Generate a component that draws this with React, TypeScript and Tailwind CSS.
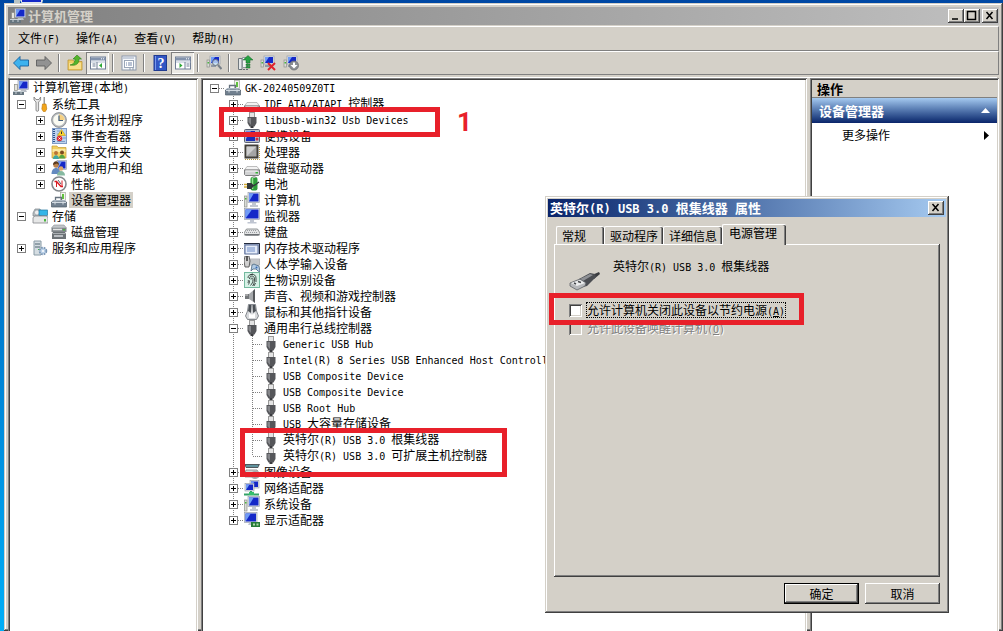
import { Fragment, type ReactNode } from "react";

interface TreeItem {
  level: number;
  label: string;
  icon: string;
  open?: boolean;
  leaf?: boolean;
  selected?: boolean;
  last?: boolean;
}

const RAISED = "bg-[#d4d0c8] shadow-[inset_-1px_-1px_#404040,inset_1px_1px_#fff,inset_-2px_-2px_#808080]";
const FRAME = "bg-[#d4d0c8] shadow-[inset_-1px_-1px_#404040,inset_1px_1px_#d4d0c8,inset_-2px_-2px_#808080,inset_2px_2px_#fff]";
const SUNKEN = "shadow-[inset_1px_1px_#808080,inset_-1px_-1px_#fff,inset_2px_2px_#404040,inset_-2px_-2px_#d4d0c8]";

const screen = (x: number, y: number, w: number, h: number) => (
  <>
    <rect x={x} y={y} width={w} height={h} fill="#dfe3ea" stroke="#8d96a6" strokeWidth=".6" />
    <rect x={x + 1} y={y + 1} width={w - 2} height={h - 2} fill="#1428c8" />
    <path d={`M${x + 1} ${y + 1}h${(w - 2) / 2}L${x + 1} ${y + h - 1}z`} fill="#6f9bf5" />
  </>
);

const smallPc = (
  <>
    {screen(4, 1, 10, 8)}
    <rect x="1" y="5" width="2.500" height="7" fill="#dadcd7" stroke="#8d918b" strokeWidth=".7" />
    <rect x="1.500" y="7" width="1.500" height="1.500" fill="#49b63d" />
    <path d="M5 11h5" stroke="#9099a5" strokeWidth="2" />
  </>
);

const usbPlug = (
  <>
    <rect x="5.500" y="0.500" width="5" height="5" fill="#e4e4e4" stroke="#9a9a9a" />
    <path d="M3.500 5h9v6l-2 3.500h-5l-2-3.500z" fill="#55565a" />
    <path d="M4.500 6H7v7l-2.500-3z" fill="#85868a" />
    <rect x="6.500" y="14" width="3" height="2" fill="#3a3b3f" />
  </>
);

const drive = (
  <>
    <path d="M3 6.500h10l2.500 3.500H.5z" fill="#f2f2f2" stroke="#a5a5a5" strokeWidth=".7" />
    <path d="M.5 10h15v4.500l-1 1h-13l-1-1z" fill="#d0d1d2" stroke="#6f7173" strokeWidth=".9" />
    <path d="M1.500 11h12" stroke="#f7f7f7" />
    <rect x="11.500" y="12" width="2.500" height="1.500" fill="#36b436" />
  </>
);

const toolbox = (
  <>
    <rect x="9.500" y="0.500" width="5" height="8" fill="#f2f4ee" stroke="#a4a89e" strokeWidth=".7" />
    <rect x="11" y="2" width="2" height="5" fill="#62c23e" />
    <path d="M4.500 8V5.500h6V8" fill="none" stroke="#66727e" strokeWidth="1.300" />
    <path d="M2 8h12l2 3H0z" fill="#aab6c2" />
    <path d="M.5 10h15v5H.5z" fill="#71808f" stroke="#4f5c69" strokeWidth=".7" />
    <path d="M1 10.500h14" stroke="#d2dae2" />
    <path d="M4 9.500v3M12 9.500v3" stroke="#d9dfe4" />
  </>
);

const pane = (
  <>
    <rect x=".5" y="2" width="15" height="12" fill="#fff" stroke="#6e7c94" />
    <path d="M.5 2.500h15v3H.5z" fill="#8393ad" />
    <path d="M11 3.800h1M13 3.800h1" stroke="#fff" />
    <path d="M1 7h14.500" stroke="#b4bfd0" />
  </>
);

const ICONS: Record<string, ReactNode> = {
  mmc: (
    <>
      {screen(5, 0.5, 10.5, 9)}
      <path d="M8 10h5l1 2H7z" fill="#b7bcc4" />
      <rect x="1.500" y="4.500" width="3" height="6" fill="#e5e5dd" stroke="#8b8b85" strokeWidth=".7" />
      <path d="M0 11h11v4H0z" fill="#66757f" />
      <path d="M0 11.500h11M3 11v3M8 11v3" stroke="#c7d0d6" />
    </>
  ),
  tools: (
    <>
      <path d="M2 1v3l2 2v8a1.300 1.300 0 0 0 2.600 0V6l2-2V1L7 3.500H4z" fill="#e6e6e6" stroke="#777" strokeWidth=".8" />
      <path d="M11.500 1h1.500v7h-1.500z" fill="#9c9c9c" />
      <path d="M10.500 8h3.500l.8 5-1.500 2.500h-2L9.800 13z" fill="#f2a51a" stroke="#bb760a" strokeWidth=".6" />
    </>
  ),
  clock: (
    <>
      <circle cx="8" cy="8" r="7.400" fill="#b6babd" stroke="#808488" strokeWidth=".8" />
      <circle cx="8" cy="8" r="5.800" fill="#fbfbf2" />
      <path d="M8 8V2.300A5.700 5.700 0 0 1 13.700 8z" fill="#f6d183" />
      <path d="M8 3.500V8.500h4" fill="none" stroke="#405c7c" strokeWidth="1.200" />
    </>
  ),
  events: (
    <>
      <rect x="1.500" y=".5" width="14" height="15" fill="#bdd3ef" stroke="#7f9cc6" />
      <path d="M3 1v14" stroke="#2c538e" strokeWidth="2" strokeDasharray="1 1" />
      <path d="M6 3h3M6 6h2M6 13.500h8M12 10h3" stroke="#7d9cc8" />
      <path d="M10.500 1.500l4 6h-8z" fill="#ffd52e" stroke="#bd9200" strokeWidth=".5" />
      <path d="M10.500 3.500v2.500" stroke="#333" />
      <circle cx="8.500" cy="10.500" r="2.800" fill="#dd2932" />
      <path d="M7.500 9.500l2 2M9.500 9.500l-2 2" stroke="#fff" strokeWidth=".9" />
    </>
  ),
  share: (
    <>
      <path d="M1 2h5l1 1.500h8V14H1z" fill="#f2cf61" stroke="#c39b31" strokeWidth=".7" />
      <path d="M1.500 5h13v3h-13z" fill="#fbe9a2" />
      <circle cx="5" cy="9" r="2" fill="#b87337" />
      <path d="M2 15c0-5 6-5 6 0z" fill="#3fa6a1" />
      <circle cx="11" cy="8.500" r="2" fill="#7b4b20" />
      <path d="M8 14.500c0-5 6-5 6 0z" fill="#54a641" />
    </>
  ),
  users: (
    <>
      {screen(6, 0.5, 9.5, 9)}
      <circle cx="5" cy="5" r="2.700" fill="#bb824b" />
      <path d="M2 5c0-5 6-5 6 0L6 3.500z" fill="#5a3b20" />
      <path d="M.5 14c0-8 9-8 9 0z" fill="#648ac0" />
      <circle cx="10" cy="8.500" r="2.300" fill="#d9a66b" />
      <path d="M6 15.500c0-6 8-6 8 0z" fill="#86b9a1" />
    </>
  ),
  perf: (
    <>
      <circle cx="8" cy="8" r="7" fill="#fff" stroke="#83888c" strokeWidth="1.600" />
      <path d="M3.500 5.500h2l4.500 5h2" fill="none" stroke="#d81d25" strokeWidth="1.500" />
      <path d="M5.500 5v6M11 4.500v6" stroke="#d81d25" />
      <path d="M7 4l3 4" stroke="#5b6268" />
    </>
  ),
  devmgr: toolbox,
  storage: (
    <>
      <path d="M1 5l2-4h5l1 2v5H1z" fill="#b8bfc4" stroke="#7c858b" strokeWidth=".7" />
      <circle cx="5" cy="4.500" r="2.500" fill="#eee" stroke="#8e979d" strokeWidth=".6" />
      <rect x="7" y="2" width="8.500" height="5.500" fill="#34b5e8" stroke="#2077a2" strokeWidth=".7" />
      <path d="M1 9.500l2-1.500h12l1 2v5H1z" fill="#e6e7e7" stroke="#83878a" strokeWidth=".8" />
      <rect x="12" y="11" width="2" height="2.500" fill="#4ab53f" />
    </>
  ),
  disk: (
    <>
      <path d="M3 1h10l2.500 3H.5z" fill="#c2c6c9" stroke="#8a8f93" strokeWidth=".6" />
      <path d="M.5 4h15v4H.5z" fill="#80868a" />
      <path d="M2 5.500h9" stroke="#e5e5e5" strokeWidth="1.500" />
      <path d="M2 8h12l1 2v5H1v-5z" fill="#6c7276" />
      <path d="M2 9.500h12" stroke="#a9aeb2" />
      <path d="M3 12h9" stroke="#d5d9dc" strokeWidth="1.500" />
      <rect x="12" y="5" width="2" height="1.500" fill="#4ab53f" />
    </>
  ),
  services: (
    <>
      <path d="M2 1h7v14H2z" fill="#d5dde2" stroke="#889aa5" />
      <path d="M3 4h5M3 7h5" stroke="#4c6270" />
      <rect x="6" y="9" width="2" height="1" fill="#43b849" />
      <circle cx="11" cy="11" r="3" fill="#dce9f6" stroke="#7794b4" strokeWidth="2.500" strokeDasharray="1.600 .8" />
      <circle cx="11" cy="11" r="2.500" fill="#bad0e7" />
      <circle cx="11" cy="11" r="1" fill="#fff" />
    </>
  ),
  drive,
  usb: usbPlug,
  portable: (
    <>
      <rect x=".5" y="1.500" width="15" height="13" rx="1" fill="#b4bbc8" stroke="#5a6172" />
      <rect x="2" y="3" width="9" height="10" fill="#1a2fb8" />
      <path d="M2 3h5l-5 8z" fill="#6c8ff0" />
      <circle cx="13" cy="11" r="1.500" fill="#d8283a" />
    </>
  ),
  cpu: (
    <>
      <path d="M.5.5h14v14H.5z" fill="#413e38" />
      <path d="M1 15.500h14.500v-14" fill="none" stroke="#b99b45" strokeDasharray="1 1" />
      <rect x="2.500" y="2.500" width="10" height="10" fill="#a5a5a5" />
      <path d="M2.500 2.500h10l-10 10z" fill="#cecece" />
    </>
  ),
  battery: (
    <>
      <rect x="6.500" y="1" width="7" height="13.500" rx="2" fill="#2e9d3a" />
      <path d="M8.500 2v11" stroke="#99e593" strokeWidth="1.500" />
      <rect x="8.500" y="0" width="3" height="2" fill="#b5b5b5" />
      <path d="M0 8.500h4M0 11h4" stroke="#d3aa34" strokeWidth="1.300" />
      <path d="M3 7h4.500l2.500 2.500L7.500 13H3z" fill="#31383b" />
      <path d="M8 10c3 0 4-2 7-4" stroke="#31383b" strokeWidth="1.200" fill="none" />
    </>
  ),
  pc: (
    <>
      {screen(4, 0.5, 11.5, 10)}
      <path d="M8 11h4v2h2v2H6v-2h2z" fill="#c2c8d2" />
      <rect x=".5" y="4" width="2.500" height="11" fill="#dadcd7" stroke="#8d918b" strokeWidth=".7" />
      <rect x="1" y="6" width="1.500" height="1.500" fill="#49b63d" />
    </>
  ),
  monitor: (
    <>
      {screen(0.5, 0.5, 15, 11)}
      <path d="M6 12h4v2h2.500v1.500h-9V14H6z" fill="#bfc5d1" />
    </>
  ),
  keyboard: (
    <>
      <path d="M2.500 5h11l2.500 4v1.500l-1.500 1H1.500L0 10.500V9z" fill="#e3e4e5" stroke="#7a7d80" strokeWidth=".8" />
      <path d="M3 6.500h10M2 8.500h12" stroke="#999da1" strokeDasharray="1 1" />
      <path d="M1 10.500h14" stroke="#6d7174" />
    </>
  ),
  memory: (
    <>
      <path d="M0 3h16v11H0z" fill="#a7b3cb" />
      <path d="M0 3.500h15.500V14" fill="none" stroke="#232a3c" />
      <rect x="1" y="5" width="13" height="9" fill="#e4ebf8" stroke="#5b6f9a" />
      <rect x="3" y="7" width="8" height="5" fill="#a9bce0" />
    </>
  ),
  hid: (
    <>
      <path d="M5 3h11v6H5z" fill="#d6d8da" stroke="#8b8f94" strokeWidth=".6" />
      <path d="M6.500 5h9M6.500 7h9" stroke="#8c9297" strokeDasharray="1 1" />
      <path d="M1 0h4l1 5-1 6H1L0 5z" fill="#d1d1d1" stroke="#535353" strokeWidth=".9" />
      <path d="M3 0v5" stroke="#333" strokeWidth="1.500" />
      <path d="M7 15l1-6 2-1 2 1 3 1 1 6-2-1-2-2-3 0z" fill="#b1cae3" stroke="#48647e" strokeWidth=".8" />
      <circle cx="12.500" cy="11.500" r="1" fill="#3569b3" />
    </>
  ),
  finger: (
    <>
      <rect x=".5" y=".5" width="15" height="15" fill="#d6f1e6" stroke="#74b99e" />
      <g fill="none" stroke="#303836" strokeWidth=".9">
        <path d="M4 6c0-5 8-5 8 0v4M5.500 7c0-4 5-4 5 0 0 4-1 6-2 7M7 7.500c0-2 2-2 2 0 0 3-1 4-2.500 6" />
        <path d="M4 8c1 1 0 2 0 3M5.500 8.500c0 2-.5 3-1 4M11.500 11l-1.500 3M6 3l3-1" />
      </g>
    </>
  ),
  speaker: (
    <>
      <path d="M1 6h4v5H1z" fill="#74777a" />
      <path d="M5 6l6-5v14l-6-4z" fill="#a6a9ac" />
      <path d="M9 3l2-2v14l-2-2z" fill="#54575a" />
      <path d="M1 7h3" stroke="#d7d7d7" />
    </>
  ),
  mouse: (
    <>
      <path d="M4.500.5h7l1 6.500 2 5-2 3.500h-9L1.500 12l2-5z" fill="#d7d9dc" stroke="#6b7076" strokeWidth=".8" />
      <path d="M5 1l-1 6 3 2 .500-8zM11 1l1 6-3 2-.500-8z" fill="#4c5157" />
      <path d="M5 9c2 2 4 2 6 0v5H5z" fill="#fff" />
    </>
  ),
  imaging: (
    <>
      <path d="M0 0h16l-2 4H2z" fill="#50595d" />
      <path d="M2 2h12" stroke="#66a7b5" strokeWidth="1.500" />
      <path d="M2 6h11l2 3v4H1V9z" fill="#d6d8d8" stroke="#777" strokeWidth=".7" />
      <circle cx="11" cy="11" r="4" fill="#a5a7ac" />
      <circle cx="11" cy="11" r="2.300" fill="#c73945" />
    </>
  ),
  network: (
    <>
      {screen(6, 0.5, 9, 7.5)}
      {screen(1, 3.5, 9, 7.5)}
      <path d="M7 11v2M0 14.500h15" stroke="#35a267" strokeWidth="2" />
      <path d="M5 12h5v3H5z" fill="#35c06d" />
    </>
  ),
  display: (
    <>
      {screen(0.5, 0.5, 12.5, 10)}
      <path d="M5 11h3v2H4z" fill="#bfc5d1" />
      <path d="M7 10h9v5H7z" fill="#277c38" />
      <path d="M9 11.500h2v2H9zM12.500 11.500h2v2h-2z" fill="#b3d9ad" />
    </>
  ),
  back: <path d="M.5 8L7 1.500v3.500h8.500v6H7v3.500z" fill="#3db2ee" stroke="#19609c" strokeWidth=".9" />,
  forward: <path d="M15.500 8L9 1.500v3.500H.5v6H9v3.500z" fill="#929292" stroke="#5d5d5d" strokeWidth=".9" />,
  up: (
    <>
      <path d="M1 5h5l1 1.500h8v8.500H1z" fill="#f1ce66" stroke="#bd9430" strokeWidth=".8" />
      <path d="M2 8h12v6H2z" fill="#f8df8c" />
      <path d="M3 10c4-1 5-3 5-6H6l4-4 4.500 4H12c0 5-3 7-9 6z" fill="#53b42c" stroke="#31801a" strokeWidth=".6" />
    </>
  ),
  consoleTree: (
    <>
      {pane}
      <path d="M7 7v7M2.500 9h3M2.500 11h3" stroke="#6e7c94" />
      <path d="M12 8v5l-3-2.500z" fill="#2ea836" />
    </>
  ),
  props: (
    <>
      <rect x="1" y="1" width="14" height="14" fill="#f5f7fa" stroke="#8b98ab" />
      <path d="M2 3h11" stroke="#9aa8be" />
      <rect x="3.500" y="5.500" width="9" height="7" fill="#fff" stroke="#9aa6b8" />
      <path d="M5 8h1M7 8h4M5 10h1M7 10h4" stroke="#7286aa" />
      <path d="M8 14h2M11 14h2" stroke="#8b98ab" />
    </>
  ),
  help: (
    <>
      <rect x="2" y=".5" width="12.500" height="15" fill="#3156c4" stroke="#203b90" />
      <path d="M3.500 1v14" stroke="#7897ec" />
      <text x="9" y="13" fontSize="14" fontWeight="700" fontFamily="Liberation Serif, serif" textAnchor="middle" fill="#fff">?</text>
    </>
  ),
  actionPane: (
    <>
      {pane}
      <path d="M10 7v7M11.500 9h3M11.500 11h3" stroke="#6e7c94" />
      <path d="M4.500 8v5l3-2.500z" fill="#2ea836" />
    </>
  ),
  scan: (
    <>
      {smallPc}
      <circle cx="9.500" cy="7.500" r="3" fill="#cbe6f9" fillOpacity=".8" stroke="#6a747f" />
      <path d="M12 10l3.500 4" stroke="#777f88" strokeWidth="2" />
    </>
  ),
  update: (
    <>
      <path d="M1.500 3.500H5v11H1.500z" fill="#e4e7e8" stroke="#70787e" />
      <path d="M5.500 2.500h5v10h-5z" fill="#f1f2f2" stroke="#8f979d" />
      <path d="M3 14.500h9" stroke="#626b71" strokeDasharray="2 1" />
      <path d="M6 5L11 .500 16 5h-3v3H9V5zM9 9h4v1.500H9zM9 11.500h4V13H9z" fill="#27a243" stroke="#146626" strokeWidth=".5" />
    </>
  ),
  remove: (
    <>
      {smallPc}
      <path d="M8 8l7 7M15 8l-7 7" stroke="#e0222b" strokeWidth="2" />
    </>
  ),
  disable: (
    <>
      {smallPc}
      <circle cx="11" cy="10.500" r="4.500" fill="#8c8f93" stroke="#6e7175" strokeWidth=".8" />
      <path d="M10 7.500h2V10h2.500L11 13.500 7.500 10H10z" fill="#fff" />
    </>
  ),
};

const MENUS = ["文件(F)", "操作(A)", "查看(V)", "帮助(H)"];

const TOOLBAR = [
  [{ icon: "back", label: "后退" }, { icon: "forward", label: "前进" }],
  [{ icon: "up", label: "向上一级" }, { icon: "consoleTree", label: "控制台树", pressed: true }],
  [{ icon: "props", label: "属性" }],
  [{ icon: "help", label: "帮助" }, { icon: "actionPane", label: "操作窗格", pressed: true }],
  [{ icon: "scan", label: "扫描" }],
  [{ icon: "update", label: "更新" }, { icon: "remove", label: "卸载" }, { icon: "disable", label: "禁用" }],
];

const CONSOLE: TreeItem[] = [
  { level: 0, label: "计算机管理(本地)", icon: "mmc" },
  { level: 1, label: "系统工具", icon: "tools", open: true },
  { level: 2, label: "任务计划程序", icon: "clock" },
  { level: 2, label: "事件查看器", icon: "events" },
  { level: 2, label: "共享文件夹", icon: "share" },
  { level: 2, label: "本地用户和组", icon: "users" },
  { level: 2, label: "性能", icon: "perf" },
  { level: 2, label: "设备管理器", icon: "devmgr", leaf: true, selected: true },
  { level: 1, label: "存储", icon: "storage", open: true },
  { level: 2, label: "磁盘管理", icon: "disk", leaf: true },
  { level: 1, label: "服务和应用程序", icon: "services" },
];

const DEVICES: TreeItem[] = [
  { level: 0, label: "GK-20240509Z0TI", icon: "devmgr", open: true },
  { level: 1, label: "IDE ATA/ATAPI 控制器", icon: "drive" },
  { level: 1, label: "libusb-win32 Usb Devices", icon: "usb" },
  { level: 1, label: "便携设备", icon: "portable" },
  { level: 1, label: "处理器", icon: "cpu" },
  { level: 1, label: "磁盘驱动器", icon: "drive" },
  { level: 1, label: "电池", icon: "battery" },
  { level: 1, label: "计算机", icon: "pc" },
  { level: 1, label: "监视器", icon: "monitor" },
  { level: 1, label: "键盘", icon: "keyboard" },
  { level: 1, label: "内存技术驱动程序", icon: "memory" },
  { level: 1, label: "人体学输入设备", icon: "hid" },
  { level: 1, label: "生物识别设备", icon: "finger" },
  { level: 1, label: "声音、视频和游戏控制器", icon: "speaker" },
  { level: 1, label: "鼠标和其他指针设备", icon: "mouse" },
  { level: 1, label: "通用串行总线控制器", icon: "usb", open: true },
  { level: 2, label: "Generic USB Hub", icon: "usb", leaf: true },
  { level: 2, label: "Intel(R) 8 Series USB Enhanced Host Controller", icon: "usb", leaf: true },
  { level: 2, label: "USB Composite Device", icon: "usb", leaf: true },
  { level: 2, label: "USB Composite Device", icon: "usb", leaf: true },
  { level: 2, label: "USB Root Hub", icon: "usb", leaf: true },
  { level: 2, label: "USB 大容量存储设备", icon: "usb", leaf: true },
  { level: 2, label: "英特尔(R) USB 3.0 根集线器", icon: "usb", leaf: true },
  { level: 2, label: "英特尔(R) USB 3.0 可扩展主机控制器", icon: "usb", leaf: true, last: true },
  { level: 1, label: "图像设备", icon: "imaging" },
  { level: 1, label: "网络适配器", icon: "network" },
  { level: 1, label: "系统设备", icon: "pc" },
  { level: 1, label: "显示适配器", icon: "display", last: true },
];

const TABS = ["常规", "驱动程序", "详细信息", "电源管理"];

// Latin runs are set in a half-width face so that two letters fill one Han cell
function Label({ text, bold }: { text: string; bold?: boolean }) {
  return (
    <>
      {text.split(/([\x20-\x7e]+)/).map((run, i) =>
        i % 2 ? (
          <span key={i} className={`whitespace-pre [font-family:'DejaVu_Sans_Mono',monospace] ${bold ? "text-[12px]" : "text-[10px]"}`}>{run}</span>
        ) : (
          <Fragment key={i}>{run}</Fragment>
        )
      )}
    </>
  );
}

function Icon({ name }: { name: string }) {
  return <svg viewBox="0 0 16 16" className="size-4 shrink-0" aria-hidden="true">{ICONS[name]}</svg>;
}

// One 19px column of the tree: the dotted guides and, when expandable, the +/- box
function Guide({ item, lines }: { item: TreeItem; lines?: boolean }) {
  const root = item.level === 0;
  const drawing = (
    <svg viewBox="0 0 19 16" className="h-4 w-[19px] overflow-visible" aria-hidden="true" shapeRendering="crispEdges">
      {lines && (
        <g stroke="#808080" strokeDasharray="1 1">
          {!root && <path d={item.last ? "M9.5 0v8" : "M9.5 0v16"} />}
          <path d="M10 8.500h10" />
        </g>
      )}
      {!item.leaf && (
        <>
          <rect x="5.500" y="4.500" width="8" height="8" fill="#fff" stroke="#808080" />
          <path d={item.open ? "M7 8.500h5" : "M7 8.500h5M9.500 6v5"} stroke="#000" />
        </>
      )}
    </svg>
  );
  if (item.leaf) return drawing;
  return <button aria-label={item.open ? "折叠" : "展开"}>{drawing}</button>;
}

function Tree({ items, lines, label }: { items: TreeItem[]; lines?: boolean; label: string }) {
  return (
    <ul role="tree" aria-label={label} className="pl-0.5">
      {items.map((item, i) => (
        <li key={i} role="treeitem" aria-selected={!!item.selected} className="flex h-4 items-center whitespace-nowrap">
          {Array.from({ length: lines ? item.level : Math.max(item.level - 1, 0) }, (_, n) => (
            <svg key={n} viewBox="0 0 19 16" className="h-4 w-[19px] shrink-0" aria-hidden="true" shapeRendering="crispEdges">
              {lines && n > 0 && <path d="M9.500 0v16" stroke="#808080" strokeDasharray="1 1" />}
            </svg>
          ))}
          {(lines || item.level > 0) && <Guide item={item} lines={lines} />}
          <span className="ml-px mr-0.5 flex"><Icon name={item.icon} /></span>
          <span className={item.selected ? "bg-[#d4d0c8] px-0.5" : "px-0.5"}><Label text={item.label} /></span>
        </li>
      ))}
    </ul>
  );
}

function CaptionButton({ label, d }: { label: string; d: string }) {
  return (
    <button aria-label={label} className={`flex h-[14px] w-4 items-center justify-center ${RAISED}`}>
      <svg viewBox="0 0 16 14" className="h-[14px] w-4" fill="none" stroke="#000" strokeWidth="1.500" aria-hidden="true"><path d={d} /></svg>
    </button>
  );
}

const CLOSE = "M4.500 3l6 7M10.500 3l-6 7";

function PropertiesDialog() {
  return (
    <section role="dialog" aria-label="属性" className={`absolute left-[545px] top-[196px] w-[404px] p-[3px] ${FRAME}`}>
      <header className="flex h-[18px] items-center justify-between bg-linear-to-r from-[#0a246a] to-[#a6caf0] px-0.5">
        <h2 className="text-[13px] font-bold text-white"><Label text="英特尔(R) USB 3.0 根集线器 属性" bold /></h2>
        <CaptionButton label="关闭" d={CLOSE} />
      </header>
      <div className="px-1.5 pb-1.5 pt-[7px]">
        <div role="tablist" className="flex h-5 items-end pl-0.5">
          {TABS.map(tab =>
            tab === "电源管理" ? (
              <button key={tab} role="tab" aria-selected="true" className="relative -mb-px h-[21px] w-16 rounded-t-xs border-l border-t border-white bg-[#d4d0c8] pb-1 pl-1.5 text-left shadow-[inset_-1px_0_#404040,inset_-2px_0_#808080]">{tab}</button>
            ) : (
              <button key={tab} role="tab" aria-selected="false" className="h-[18px] rounded-t-xs border-l border-t border-white px-[5px] shadow-[inset_-1px_0_#404040,inset_-2px_0_#808080] first:pr-[18px]">{tab}</button>
            )
          )}
        </div>
        <div role="tabpanel" className="h-[333px] px-[15px] pt-[14px] shadow-[inset_-1px_-1px_#404040,inset_1px_1px_#fff,inset_-2px_-2px_#808080]">
          <div className="flex gap-3">
            <svg viewBox="0 0 32 32" className="mt-1.5 size-8" aria-hidden="true">
              <path d="M23 11l7-3 1 2-6 5z" fill="#3b3c40" />
              <path d="M10 15l11-6 5 1 1 3-9 9-8 2z" fill="#4b4d52" />
              <path d="M11 15l10-5 3 1-10 6z" fill="#8e9095" />
              <path d="M1 19l10-4 6 4-1 3-8 4-7-4z" fill="#b5b7ba" stroke="#606368" strokeWidth=".8" />
              <path d="M2 19l9-3 5 3-8 3z" fill="#ecedee" />
              <path d="M5 19l2 1M9 17.500l3 1" stroke="#44464a" strokeWidth="1.500" />
            </svg>
            <p><Label text="英特尔(R) USB 3.0 根集线器" /></p>
          </div>
          <div className="mt-1.5 flex flex-col gap-0.5">
            <div className="flex h-4 items-center gap-1">
              <input id="allow-off" type="checkbox" className={`size-[13px] appearance-none bg-white ${SUNKEN}`} />
              <label htmlFor="allow-off" className="h-4 px-px outline-1 -outline-offset-1 outline-dotted outline-black">
                <Label text="允许计算机关闭此设备以节约电源(" /><u className="text-[10px] [font-family:'DejaVu_Sans_Mono',monospace]">A</u><Label text=")" />
              </label>
            </div>
            <div className="flex h-4 items-center gap-1">
              <input id="allow-wake" type="checkbox" disabled className={`size-[13px] appearance-none bg-[#d4d0c8] ${SUNKEN}`} />
              <label htmlFor="allow-wake" className="h-4 px-px text-[#808080] [text-shadow:1px_1px_#fff]">
                <Label text="允许此设备唤醒计算机(" /><u className="text-[10px] [font-family:'DejaVu_Sans_Mono',monospace]">O</u><Label text=")" />
              </label>
            </div>
          </div>
        </div>
        <div className="mt-1.5 flex justify-end gap-1.5">
          <button className="h-[21px] w-[75px] border border-black bg-[#d4d0c8] shadow-[inset_-1px_-1px_#404040,inset_1px_1px_#fff,inset_-2px_-2px_#808080]">确定</button>
          <button className={`h-[21px] w-[75px] ${RAISED}`}>取消</button>
        </div>
      </div>
      <div className="pointer-events-none absolute left-1 top-[97px] h-8 w-[255px] border-5 border-[#e8202a]" />
    </section>
  );
}

export default function App() {
  return (
    <div className="relative flex min-h-screen flex-col overflow-hidden bg-linear-to-b from-[#0048a4] to-[#00aef8] pl-1 pt-[3px] text-[12px] leading-4 text-black [font-family:'Noto_Sans_CJK_SC',sans-serif]">
      <svg viewBox="0 0 30 4" className="absolute left-[14px] top-0 h-1 w-[30px]" aria-hidden="true">
        <path d="M0 0h6v3H0z" fill="#b9c4c6" />
        <path d="M6 0h23l-1 4H8z" fill="#dfe3ea" />
        <path d="M8 0h19v2H8z" fill="#1428c8" />
      </svg>

      <main className={`flex flex-1 flex-col px-1 pt-1 ${FRAME}`}>
        {/* Title bar */}
        <header className="flex h-[18px] items-center gap-0.5 bg-linear-to-r from-[#808080] to-[#c0c0c0] pl-0.5 pr-px">
          <Icon name="mmc" />
          <h1 className="grow text-[13px] font-bold text-[#d4d0c8]">计算机管理</h1>
          <div className="flex">
            <CaptionButton label="最小化" d="M4 10h6" />
            <CaptionButton label="最大化" d="M3.500 2.500h8v8h-8z" />
          </div>
          <CaptionButton label="关闭" d={CLOSE} />
        </header>

        {/* Menu bar */}
        <nav className="mt-px flex h-[25px] items-center gap-4 border border-b-[#808080] border-l-white border-r-[#808080] border-t-white px-[9px]">
          {MENUS.map(menu => <button key={menu}><Label text={menu} /></button>)}
        </nav>

        {/* Toolbar */}
        <div role="toolbar" className="flex h-6 items-center border border-b-[#808080] border-l-white border-r-[#808080] border-t-white">
          {TOOLBAR.map((group, i) => (
            <Fragment key={i}>
              {i > 0 && <span className="mx-[3px] h-[18px] w-0.5 border-l border-r border-l-[#808080] border-r-white" />}
              {group.map(tool => (
                <button
                  key={tool.icon}
                  aria-label={tool.label}
                  className={`flex h-[22px] w-[23px] items-center justify-center ${
                    "pressed" in tool ? "bg-[#ebe9e4] shadow-[inset_1px_1px_#808080,inset_-1px_-1px_#fff]" : ""
                  }`}
                >
                  <Icon name={tool.icon} />
                </button>
              ))}
            </Fragment>
          ))}
        </div>

        {/* Panes */}
        <div className="-mb-1 mt-[3px] flex flex-1 gap-[3px] shadow-[0_-3px_0_-2px_#fff]">
          <aside className={`w-[190px] shrink-0 bg-white p-0.5 ${SUNKEN}`}>
            <Tree items={CONSOLE} label="控制台" />
          </aside>

          <div className={`relative min-w-0 grow overflow-hidden bg-white p-0.5 ${SUNKEN}`}>
            <Tree items={DEVICES} lines label="设备" />
            <div className="pointer-events-none absolute left-[18px] top-[29px] h-[30px] w-[221px] border-5 border-[#e8202a]" />
            <span className="absolute left-64 top-8 text-[26px] font-bold leading-6 text-[#e8202a] [font-family:Roboto,sans-serif]">1</span>
            <div className="pointer-events-none absolute left-[39px] top-[350px] h-[49px] w-[267px] border-5 border-[#e8202a]" />
          </div>

          <aside className={`w-[189px] shrink-0 bg-white p-0.5 ${SUNKEN}`}>
            <h2 className="h-[18px] border-b border-[#808080] bg-[#d4d0c8] px-[5px] text-[13px] font-bold leading-[18px]">操作</h2>
            <div className="flex h-[25px] items-center justify-between bg-linear-to-b from-[#a6caf0] to-[#0a246a] px-[7px] text-[13px] font-bold text-white">
              设备管理器
              <svg viewBox="0 0 9 5" className="h-[5px] w-[9px]" aria-hidden="true"><path d="M4.500 0L9 5H0z" fill="#fff" /></svg>
            </div>
            <button className="flex h-6 w-full items-center justify-between pl-[30px] pr-2">
              更多操作
              <svg viewBox="0 0 5 9" className="h-[9px] w-[5px]" aria-hidden="true"><path d="M0 0l5 4.500L0 9z" /></svg>
            </button>
          </aside>
        </div>
      </main>

      <PropertiesDialog />
    </div>
  );
}
